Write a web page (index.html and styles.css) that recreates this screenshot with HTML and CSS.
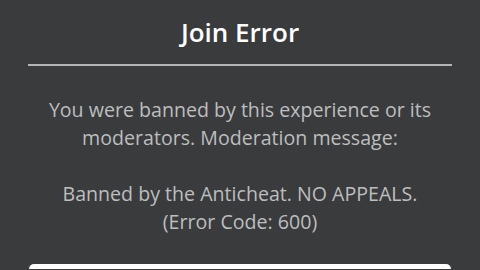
FILE: index.html
```html
<!DOCTYPE html>
<html>
<head>
<meta charset="utf-8">
<link rel="stylesheet" href="styles.css">
</head>
<body>
<div class="dialog">
  <h1 class="title">Join Error</h1>
  <div class="divider"></div>
  <div class="message">
    <p>You were banned by this experience or its moderators. Moderation message:</p>
    <p>Banned by the Anticheat. NO APPEALS.<br>(Error Code: 600)</p>
  </div>
  <div class="button"></div>
</div>
</body>
</html>
```
FILE: styles.css
```css
html, body {
  margin: 0;
  padding: 0;
  background: #393b3d;
  width: 480px;
  height: 270px;
  overflow: hidden;
}
.dialog {
  padding: 0 28px;
  font-family: "Open Sans", "Noto Sans", sans-serif;
  display: flex;
  flex-direction: column;
}
.title {
  margin: 0;
  height: 64px;
  line-height: 64px;
  text-align: center;
  color: #ffffff;
  font-size: 26px;
  font-weight: 600;
}
.divider {
  height: 2px;
  background: #b5b5b5;
}
.message {
  padding-top: 30px;
  color: #bdbebe;
  font-size: 19.6px;
  line-height: 28px;
  text-align: center;
}
.message p {
  margin: 0 0 28px 0;
}
.button {
  height: 5px;
  background: #ffffff;
  border-radius: 8px 8px 0 0;
  margin: 0 1px;
}
```
